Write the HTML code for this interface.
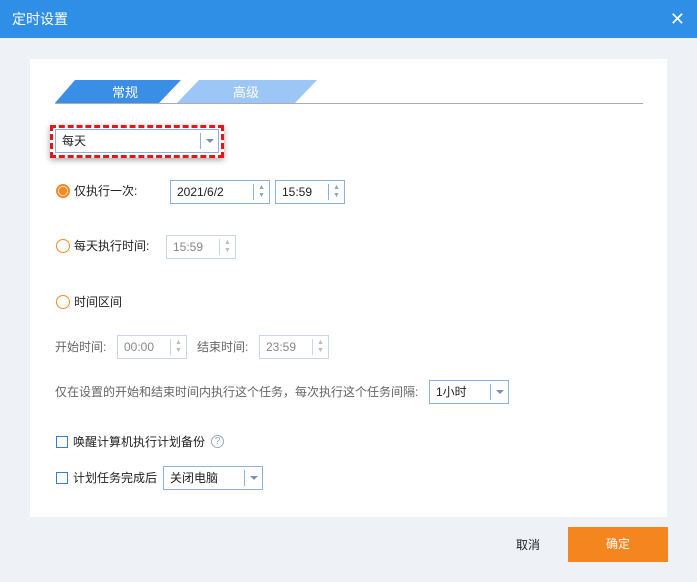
<!DOCTYPE html>
<html><head><meta charset="utf-8"><style>
*{margin:0;padding:0;box-sizing:border-box}
body{width:697px;height:582px;background:#eef2f7;font-family:"Liberation Sans","Noto Sans CJK SC",sans-serif;font-size:12px;color:#222;position:relative;overflow:hidden}
.a{position:absolute;line-height:16px;white-space:nowrap}
.title{left:0;top:0;width:697px;height:38px;background:#2f8ee5;color:#fff;font-size:14px;line-height:38px;padding-left:12px}
.panel{left:30px;top:59px;width:637px;height:458px;background:#fff}
.box{border:1px solid #8fb0d8;background:#fff;height:24px;line-height:22px;padding-left:6px;font-size:12px}
.dis{border-color:#c8d6e8;color:#888}
.spin{position:absolute;right:0;top:3px;width:16px;height:16px;border-left:1px solid #8fb0d8;font-size:7px;color:#8aa;text-align:center;line-height:8px}
.dis .spin{border-color:#c8d6e8;color:#bbb}
.dd{position:absolute;right:0;top:3px;width:18px;height:16px;border-left:1px solid #8fb0d8}
.dd:after{content:"";position:absolute;left:5px;top:6px;border:4px solid transparent;border-top:4px solid #7a90b0}
.radio{width:14px;height:14px;border:1px solid #f08a2a;border-radius:50%}
.chk{width:12px;height:12px;border:1px solid #2f7fd8}
.g{color:#666}
</style></head><body>
<div class="a title">定时设置</div>
<div class="a" style="right:12px;top:9px;color:#fff;font-size:18px;line-height:20px">✕</div>
<div class="a panel"></div>
<svg class="a" style="left:55px;top:80px" width="590" height="24">
<polygon points="0,23 20,0 126,0 104,23" fill="#3a8ee6"/>
<polygon points="122,23 144,0 262,0 240,23" fill="#9cc6f5"/>
<line x1="0" y1="23.5" x2="588" y2="23.5" stroke="#aab" stroke-width="1"/>
<text x="57" y="17" fill="#fff" font-size="13" font-family="Liberation Sans,Noto Sans CJK SC,sans-serif">常规</text>
<text x="178" y="17" fill="#fff" font-size="13" font-family="Liberation Sans,Noto Sans CJK SC,sans-serif">高级</text>
</svg>
<div class="a" style="left:50px;top:125px;width:174px;height:33px;border:3px dashed #e5161a;box-shadow:0 2px 6px rgba(0,0,0,.35)"></div>
<div class="a box" style="left:55px;top:129px;width:164px;height:24px">每天<div class="dd"></div></div>
<div class="a radio" style="left:56px;top:184px;border:2px solid #f08a2a;background:radial-gradient(circle,#f08a2a 0 4px,#fff 4.5px)"></div>
<div class="a" style="left:74px;top:183px">仅执行一次:</div>
<div class="a box" style="left:170px;top:180px;width:100px">2021/6/2<div class="spin">▲<br>▼</div></div>
<div class="a box" style="left:275px;top:180px;width:70px">15:59<div class="spin">▲<br>▼</div></div>
<div class="a radio" style="left:56px;top:239px"></div>
<div class="a" style="left:74px;top:238px">每天执行时间:</div>
<div class="a box dis" style="left:166px;top:235px;width:70px">15:59<div class="spin">▲<br>▼</div></div>
<div class="a radio" style="left:56px;top:295px"></div>
<div class="a" style="left:74px;top:294px">时间区间</div>
<div class="a g" style="left:55px;top:339px">开始时间:</div>
<div class="a box dis" style="left:117px;top:335px;width:70px">00:00<div class="spin">▲<br>▼</div></div>
<div class="a g" style="left:197px;top:339px">结束时间:</div>
<div class="a box dis" style="left:259px;top:335px;width:70px">23:59<div class="spin">▲<br>▼</div></div>
<div class="a g" style="left:55px;top:384px">仅在设置的开始和结束时间内执行这个任务，每次执行这个任务间隔:</div>
<div class="a box" style="left:429px;top:380px;width:80px">1小时<div class="dd"></div></div>
<div class="a chk" style="left:56px;top:436px"></div>
<div class="a" style="left:73px;top:434px">唤醒计算机执行计划备份</div>
<div class="a" style="left:211px;top:435px;width:13px;height:13px;border:1px solid #9ab;border-radius:50%;color:#9ab;font-size:10px;line-height:11px;text-align:center">?</div>
<div class="a chk" style="left:56px;top:472px"></div>
<div class="a" style="left:73px;top:470px">计划任务完成后</div>
<div class="a box" style="left:163px;top:466px;width:100px">关闭电脑<div class="dd"></div></div>
<div class="a" style="left:516px;top:537px">取消</div>
<div class="a" style="left:568px;top:527px;width:100px;height:35px;background:#f5861f;color:#fff;text-align:center;line-height:35px">确定</div>
</body></html>
